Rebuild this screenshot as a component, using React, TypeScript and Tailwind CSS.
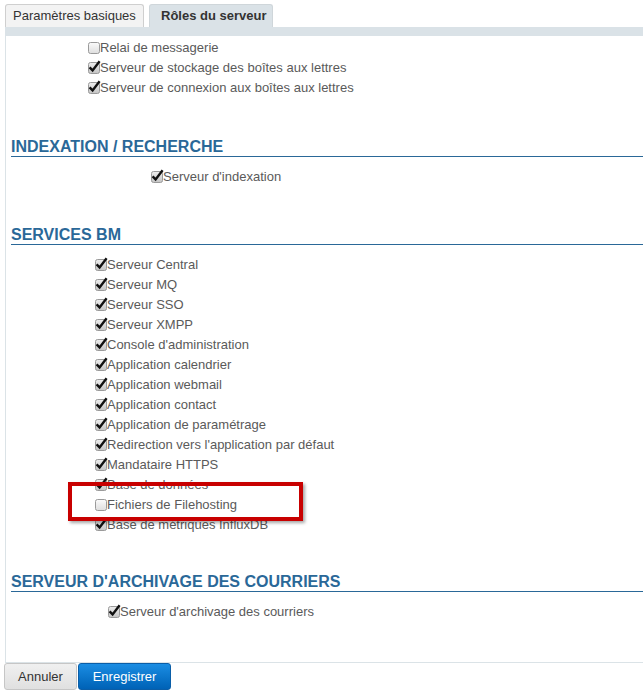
import React from 'react';

type Item = { label: string; checked: boolean };

const Checkbox = ({ checked }: { checked: boolean }) => (
  <svg width="13" height="15" viewBox="0 0 13 15" className="shrink-0 self-start mt-[1px]">
    <defs>
      <linearGradient id="cbOn" x1="0" y1="0" x2="0" y2="1">
        <stop offset="0" stopColor="#eeeeee" />
        <stop offset="1" stopColor="#c4c4c4" />
      </linearGradient>
      <linearGradient id="cbOff" x1="0" y1="0" x2="0" y2="1">
        <stop offset="0" stopColor="#fbfbfb" />
        <stop offset="1" stopColor="#dedede" />
      </linearGradient>
    </defs>
    <rect x="0.5" y="3.5" width="11" height="11" rx="2" fill={checked ? 'url(#cbOn)' : 'url(#cbOff)'} stroke="#9a9a9a" />
    {checked && (
      <path d="M1.6 8.4 L4.6 11.4 L11.6 2.2" fill="none" stroke="#111" strokeWidth="2.4" strokeLinejoin="miter" />
    )}
  </svg>
);

const Row = ({ item }: { item: Item }) => (
  <div className="flex h-[20px] items-start">
    <Checkbox checked={item.checked} />
    <span className="leading-[20px] text-[#5a5a5a] -ml-px">{item.label}</span>
  </div>
);

const Heading = ({ children, mt }: { children: React.ReactNode; mt: string }) => (
  <h2 className={`${mt} ml-[5px] border-b border-[#2a6898] text-[16px] font-bold leading-[18px] text-[#2a6898]`}>
    {children}
  </h2>
);

const App = () => {
  const mail: Item[] = [
    { label: 'Relai de messagerie', checked: false },
    { label: 'Serveur de stockage des boîtes aux lettres', checked: true },
    { label: 'Serveur de connexion aux boîtes aux lettres', checked: true },
  ];

  const services: Item[] = [
    { label: 'Serveur Central', checked: true },
    { label: 'Serveur MQ', checked: true },
    { label: 'Serveur SSO', checked: true },
    { label: 'Serveur XMPP', checked: true },
    { label: "Console d'administration", checked: true },
    { label: 'Application calendrier', checked: true },
    { label: 'Application webmail', checked: true },
    { label: 'Application contact', checked: true },
    { label: 'Application de paramétrage', checked: true },
    { label: "Redirection vers l'application par défaut", checked: true },
    { label: 'Mandataire HTTPS', checked: true },
    { label: 'Base de données', checked: true },
    { label: 'Fichiers de Filehosting', checked: false },
    { label: 'Base de métriques InfluxDB', checked: true },
  ];

  return (
    <div className="w-[643px] h-[695px] overflow-hidden bg-white font-['Liberation_Sans',Arial,sans-serif] text-[13px]">
      {/* tabs */}
      <div className="flex items-end gap-[5px] pl-[5px] pt-[4px] h-[27px]">
        <div className="h-[23px] w-[139px] pl-[7px] rounded-t-[3px] border border-b-0 border-[#cfcfcf] bg-[#f3f3f3] text-[#333] leading-[22px]">
          Paramètres basiques
        </div>
        <div className="h-[23px] w-[124px] pl-[11px] rounded-t-[3px] border border-b-0 border-[#cfd6da] bg-[#dae2e7] text-[#333] font-bold leading-[22px]">
          Rôles du serveur
        </div>
      </div>
      <div className="ml-[5px] h-[9px] bg-[#dae2e7]" />

      {/* panel */}
      <div className="ml-[5px] h-[627px] border-l border-b border-[#dbe3e7] pt-[2px]">
        <div className="pl-[82px]">
          {mail.map((it) => (
            <Row key={it.label} item={it} />
          ))}
        </div>

        <Heading mt="mt-[40px]">INDEXATION / RECHERCHE</Heading>
        <div className="mt-[10px] pl-[145px]">
          <Row item={{ label: "Serveur d'indexation", checked: true }} />
        </div>

        <Heading mt="mt-[39px]">SERVICES BM</Heading>
        <div className="relative mt-[10px] pl-[89px]">
          {services.map((it) => (
            <Row key={it.label} item={it} />
          ))}
          <div className="absolute top-[227px] left-[62px] w-[235px] h-[39px] border-4 border-[#c80000] shadow-[2px_2px_3px_rgba(0,0,0,0.35)]" />
        </div>

        <Heading mt="mt-[38px]">SERVEUR D'ARCHIVAGE DES COURRIERS</Heading>
        <div className="mt-[10px] pl-[102px]">
          <Row item={{ label: "Serveur d'archivage des courriers", checked: true }} />
        </div>
      </div>

      {/* buttons */}
      <div className="flex gap-px pl-[4px]">
        <button className="h-[27px] w-[73px] rounded-[3px] border border-[#c6c6c6] bg-gradient-to-b from-[#f0f0f0] to-[#e0e0e0] text-[#333]">
          Annuler
        </button>
        <button className="h-[27px] w-[93px] rounded-[3px] border border-[#0a5ea8] bg-gradient-to-b from-[#1a8de3] to-[#0062b6] text-white">
          Enregistrer
        </button>
      </div>
    </div>
  );
};

export default App;
